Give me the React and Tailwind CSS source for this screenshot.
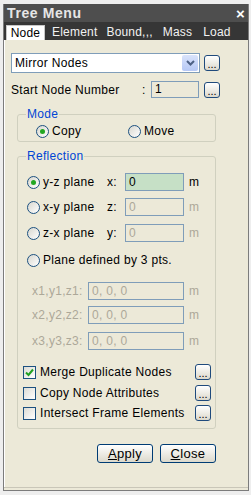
import React from "react";

const DotsButton = () => (
  <button className="w-[16px] h-[16px] shrink-0 rounded-[3px] border border-[#1f4a7c] bg-linear-to-b from-white to-[#dcd9cc] flex items-end justify-center pb-[1px] text-[11px] leading-[10px] tracking-normal text-black">
    ...
  </button>
);

const Radio = ({ checked }) => (
  <span className="w-[13px] h-[13px] shrink-0 rounded-full border border-[#1c5180] bg-linear-to-br from-[#d8d7cf] to-white flex items-center justify-center">
    {checked && <span className="w-[5px] h-[5px] rounded-full bg-[#22a722]" />}
  </span>
);

const Checkbox = ({ checked }) => (
  <span className="w-[13px] h-[13px] shrink-0 border border-[#1c5180] bg-linear-to-br from-[#dcdcd5] to-white flex items-center justify-center">
    {checked && (
      <svg width="9" height="9" viewBox="0 0 9 9">
        <path d="M1 4.5 L3.5 7 L8 1.5" stroke="#21a121" strokeWidth="2" fill="none" />
      </svg>
    )}
  </span>
);

const Field = ({ value, active, className }) => (
  <div
    className={`h-[18px] border border-[#7f9db9] px-[3px] text-[12px] leading-[16px] ${
      active ? "bg-[#c6e0c6] text-black" : "bg-[#ece9d8] text-[#aca899]"
    } ${className}`}
  >
    {value}
  </div>
);

const PlaneRow = ({ label, axis, checked, className }) => (
  <div className={`flex items-center h-[18px] ml-[9px] ${className}`}>
    <Radio checked={checked} />
    <span className="ml-[3px] w-[64px]">{label}</span>
    <span className="w-[18px]">{axis}</span>
    <Field value="0" active={checked} className="w-[59px]" />
    <span className={`ml-[5px] ${checked ? "text-black" : "text-[#aca899]"}`}>m</span>
  </div>
);

const PointRow = ({ label, className }) => (
  <div className={`flex items-center h-[18px] ml-[14px] text-[#aca899] ${className}`}>
    <span className="w-[56px]">{label}</span>
    <Field value="0, 0, 0" className="w-[96px]" />
    <span className="ml-[5px]">m</span>
  </div>
);

const OptionRow = ({ label, checked, className }) => (
  <div className={`flex items-center h-[16px] ml-[5px] mr-[4px] ${className}`}>
    <Checkbox checked={checked} />
    <span className="ml-[4px] flex-1">{label}</span>
    <DotsButton />
  </div>
);

export default function App() {
  return (
    <div className="w-[251px] h-[495px] bg-[#eeeeee] pl-[3px] pt-[4px] font-['Liberation_Sans',Arial,sans-serif] text-[12px] leading-[14px] tracking-[0.3px] text-black">
      <div className="w-[246px] h-[487px] flex flex-col border-x border-b border-[#7c7c7c]">
        {/* Title */}
        <div className="h-[18px] bg-[#4e4e4e] flex items-center justify-between pl-[3px] pr-[3px]">
          <span className="text-[14px] font-bold tracking-[0.6px] text-[#e6e6e6]">Tree Menu</span>
          <span className="text-[15px] font-bold text-white leading-none">×</span>
        </div>

        {/* Tabs */}
        <div className="h-[18px] bg-[#363636] flex items-end pl-[2px] text-[12px] tracking-[0.2px] text-[#f2f2f2]">
          <div className="h-[15px] w-[39px] bg-white text-black border-t border-x border-[#c8c8c8] flex items-center justify-center">
            Node
          </div>
          <span className="ml-[7px] mb-[1px]">Element</span>
          <span className="ml-[9px] mb-[1px]">Bound,,,</span>
          <span className="ml-[10px] mb-[1px]">Mass</span>
          <span className="ml-[11px] mb-[1px]">Load</span>
        </div>

        {/* Content */}
        <div className="flex-1 bg-[#ece9d8] border-l border-white pl-[6px] pt-[13px] flex flex-col">
          <div className="flex items-center h-[20px]">
            <div className="w-[189px] h-[20px] bg-white border border-[#7f9db9] flex items-center justify-between pl-[3px] pr-[1px]">
              <span className="text-[12px]">Mirror Nodes</span>
              <span className="w-[16px] h-[16px] rounded-[2px] bg-linear-to-b from-[#d9e3fb] to-[#b6c8f5] flex items-center justify-center">
                <svg width="9" height="6" viewBox="0 0 9 6">
                  <path d="M1 1 L4.5 4.5 L8 1" stroke="#4d6185" strokeWidth="2" fill="none" />
                </svg>
              </span>
            </div>
            <div className="ml-[4px]">
              <DotsButton />
            </div>
          </div>

          <div className="flex items-center h-[17px] mt-[8px]">
            <span className="w-[131px]">Start Node Number</span>
            <span className="w-[9px]">:</span>
            <div className="w-[48px] h-[17px] border border-[#7f9db9] bg-[#ece9d8] px-[3px] leading-[15px]">1</div>
            <div className="ml-[5px]">
              <DotsButton />
            </div>
          </div>

          <fieldset className="mt-[9px] ml-[6px] w-[199px] border border-[#d0d0bf] rounded-[3px] pb-[3px]">
            <legend className="ml-[8px] px-[1px] text-[#0046d5]">Mode</legend>
            <div className="flex items-center h-[14px] mt-[3px] ml-[18px]">
              <Radio checked />
              <span className="ml-[3px] w-[76px]">Copy</span>
              <Radio />
              <span className="ml-[3px]">Move</span>
            </div>
          </fieldset>

          <fieldset className="mt-[7px] ml-[6px] w-[199px] border border-[#d0d0bf] rounded-[3px] pb-[7px]">
            <legend className="ml-[8px] px-[1px] text-[#0046d5]">Reflection</legend>
            <PlaneRow label="y-z plane" axis="x:" checked className="mt-[10px]" />
            <PlaneRow label="x-y plane" axis="z:" className="mt-[7px]" />
            <PlaneRow label="z-x plane" axis="y:" className="mt-[8px]" />
            <div className="flex items-center h-[18px] ml-[9px] mt-[9px]">
              <Radio />
              <span className="ml-[3px]">Plane defined by 3 pts.</span>
            </div>
            <PointRow label="x1,y1,z1:" className="mt-[13px]" />
            <PointRow label="x2,y2,z2:" className="mt-[6px]" />
            <PointRow label="x3,y3,z3:" className="mt-[8px]" />
            <OptionRow label="Merge Duplicate Nodes" checked className="mt-[14px]" />
            <OptionRow label="Copy Node Attributes" className="mt-[5px]" />
            <OptionRow label="Intersect Frame Elements" className="mt-[4px]" />
          </fieldset>

          <div className="flex justify-end gap-[7px] mt-[15px] w-[205px]">
            <button className="w-[56px] h-[19px] rounded-[3px] border border-[#003c74] bg-linear-to-b from-white to-[#dcd9cc] text-[13px] leading-[17px]">
              <span className="underline">A</span>pply
            </button>
            <button className="w-[56px] h-[19px] rounded-[3px] border border-[#003c74] bg-linear-to-b from-white to-[#dcd9cc] text-[13px] leading-[17px]">
              <span className="underline">C</span>lose
            </button>
          </div>
        </div>
        <div className="h-[3px] bg-[#ece9d8] border-t border-[#c9c6b8]" />
      </div>
    </div>
  );
}
